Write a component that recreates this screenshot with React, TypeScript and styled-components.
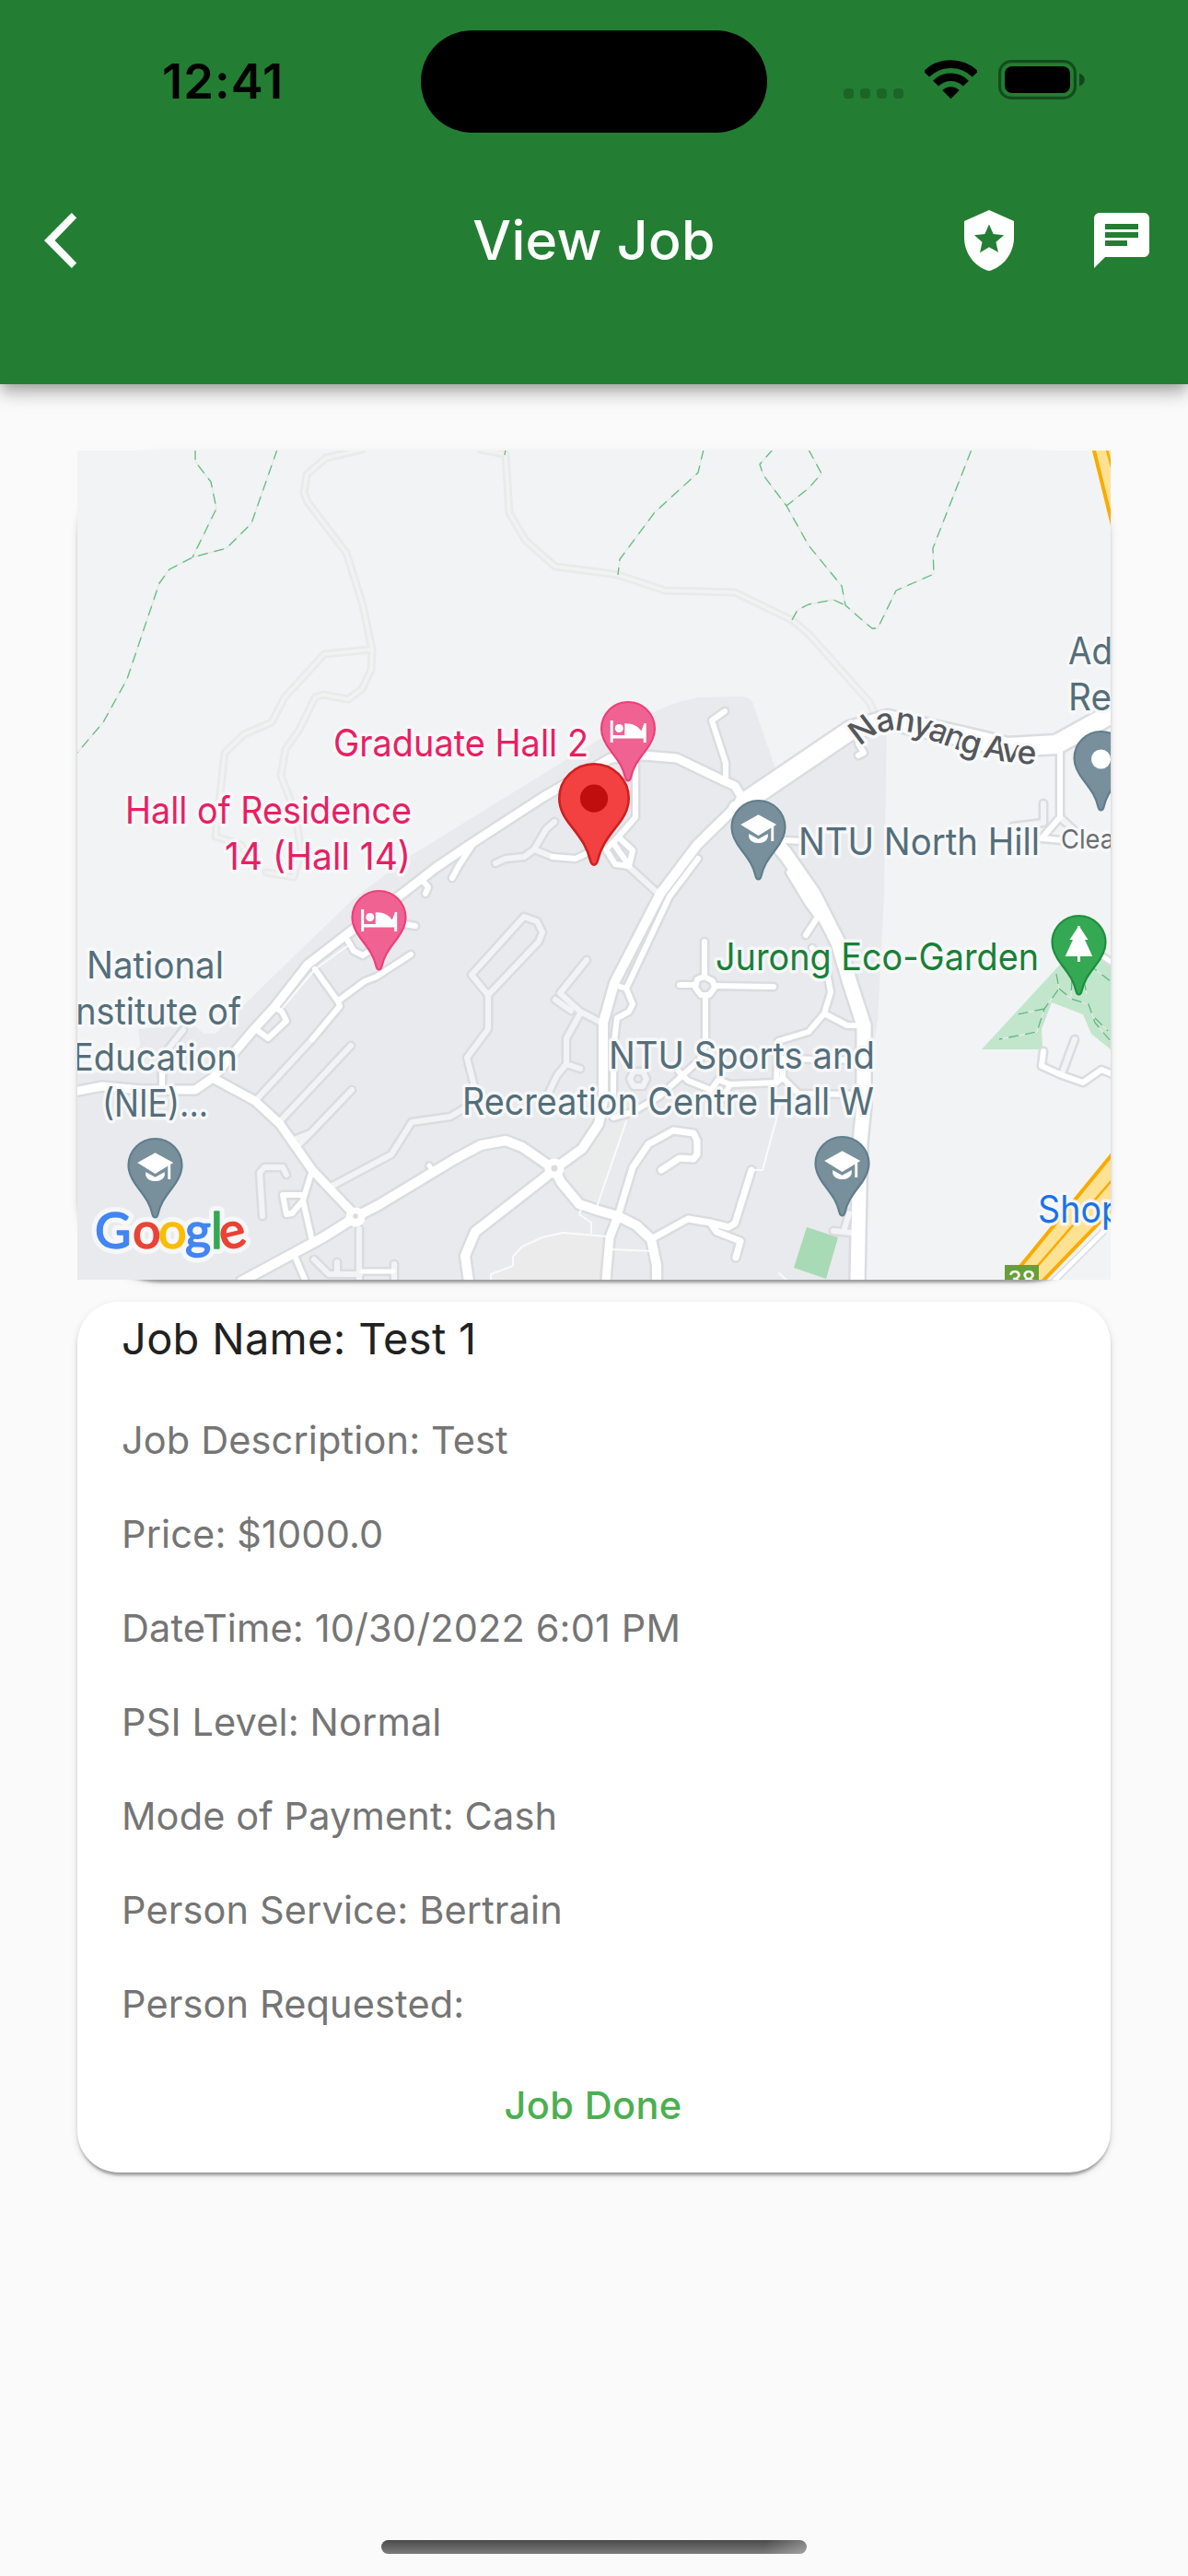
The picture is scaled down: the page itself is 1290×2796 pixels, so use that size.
import React from "react";
import styled, { createGlobalStyle } from "styled-components";

const GlobalStyle = createGlobalStyle`
  * { box-sizing: border-box; }
  body { margin: 0; background: #fafafa; }
`;

const FONT = `Inter, Roboto, "Liberation Sans", sans-serif`;

const Screen = styled.div`
  width: 1290px;
  height: 2796px;
  display: flex;
  flex-direction: column;
  background: #fafafa;
  font-family: ${FONT};
  overflow: hidden;
`;

const AppBar = styled.header`
  flex: none;
  height: 417px;
  background: #237e33;
  box-shadow: 0 6px 12px -3px rgba(0, 0, 0, 0.2), 0 12px 15px rgba(0, 0, 0, 0.14),
    0 3px 30px rgba(0, 0, 0, 0.12);
`;

const StatusBar = styled.div`
  height: 177px;
  display: grid;
  grid-template-columns: 457px 376px 457px;
`;

const Clock = styled.time`
  padding: 56px 0 0 176px;
  font-size: 52.5px;
  line-height: 64px;
  font-weight: 600;
  letter-spacing: 1px;
  color: #000;
`;

const Island = styled.div`
  margin-top: 33px;
  height: 111px;
  border-radius: 56px;
  background: #000;
`;

const StatusIcons = styled.div`
  display: flex;
  align-items: flex-start;
  padding: 65px 0 0 83px;
`;

const Signal = styled.div`
  display: flex;
  gap: 7px;
  margin: 31px 23px 0 0;
`;

const SignalDot = styled.span`
  width: 11px;
  height: 11px;
  border-radius: 4px;
  background: rgba(0, 0, 0, 0.2);
`;

const WifiIcon = styled.svg`
  width: 57px;
  height: 43px;
  margin-right: 23px;
`;

const BatteryIcon = styled.svg`
  width: 95px;
  height: 43px;
`;

const Toolbar = styled.div`
  height: 168px;
  display: grid;
  grid-template-columns: 1fr auto 1fr;
  align-items: center;
  padding: 0 36px 0 48px;
`;

const BackButton = styled.button`
  display: flex;
  width: 36px;
  padding: 0;
  border: 0;
  background: none;
`;

const Title = styled.h1`
  margin: 0 0 0 -12px;
  font-size: 59px;
  line-height: 72px;
  font-weight: 500;
  letter-spacing: 0.3px;
  color: #fff;
`;

const Actions = styled.div`
  display: flex;
  justify-content: flex-end;
  gap: 72px;
`;

const ActionIcon = styled.svg`
  width: 72px;
  height: 72px;
  fill: #fff;
`;

const Content = styled.main`
  display: flex;
  flex-direction: column;
  gap: 24px;
  padding: 72px 84px 0;
`;

const cardShadow = `0 6px 3px -3px rgba(0, 0, 0, 0.2), 0 3px 3px rgba(0, 0, 0, 0.14),
  0 3px 9px rgba(0, 0, 0, 0.12)`;

const MapCard = styled.section`
  height: 900px;
  border-radius: 90px;
  box-shadow: ${cardShadow};
`;

const MapCanvas = styled.svg`
  display: block;
  width: 1122px;
  height: 900px;
  font-family: ${FONT};
`;

const JobCard = styled.section`
  height: 945px;
  display: flex;
  flex-direction: column;
  padding-left: 48px;
  border-radius: 45px;
  background: #fff;
  box-shadow: ${cardShadow};
`;

const JobName = styled.h2`
  margin: 0 0 19px;
  font-size: 47px;
  line-height: 80px;
  font-weight: 400;
  letter-spacing: 0.3px;
  color: #212121;
`;

const Field = styled.p`
  margin: 0;
  font-size: 41.5px;
  line-height: 102px;
  letter-spacing: 0.13px;
  color: #757575;
`;

const DoneButton = styled.button`
  margin: 0 50px 0 0;
  padding: 0;
  border: 0;
  background: none;
  font-family: ${FONT};
  font-size: 41.5px;
  line-height: 118px;
  font-weight: 550;
  letter-spacing: 0.4px;
  color: #4caf50;
`;

const HomeArea = styled.footer`
  margin-top: auto;
  display: flex;
  justify-content: center;
  padding-bottom: 24px;
`;

const HomeIndicator = styled.div`
  width: 462px;
  height: 15px;
  border-radius: 8px;
  background: linear-gradient(100deg, transparent 90%, rgba(255, 255, 255, 0.3)),
    linear-gradient(#4a4a4a, #7c7c7c);
`;

const fields = [
  "Job Description: Test",
  "Price: $1000.0",
  "DateTime: 10/30/2022 6:01 PM",
  "PSI Level: Normal",
  "Mode of Payment: Cash",
  "Person Service: Bertrain",
  "Person Requested:",
];

/* ---------- map data ---------- */

type Road = { w: number; d: string };

const trackRoads = [
  "M309-1L270 8L249 26L246 46L250 56L292 111L310 168L320 216L319 238L309 259L294 270L267 265L258 268L241 303L226 324L221 353L236 391L243 434L235 463L205 458",
  "M318 216L268 221L225 268L211 295L181 308L160 328L150 419L178 428L192 451",
  "M438-1L465 4L469 68L487 98L519 126L566 132L587 135L638 152L714 154L776 184L794 199L860 273L867 288",
];

const footpaths = [
  "M128-1L128 12L145 34L151 63L125 116",
  "M217-1L189 79L162 106L125 116L100 129L89 144L54 248L28 295L0 328",
  "M680-1L674 24L627 67L589 118L587 135",
  "M755-1L741 15L745 27L770 60L794 103L830 147L834 168L858 189L863 193L869 193L889 152L930 134L929 106L971-1",
  "M794-1L808 25L794 41L770 60",
  "M776 184L782 173L794 167L821 162L834 168",
  "M465-1L464 5",
];

const serviceRoads = [
  "M115 629L92 658L92 680",
  "M195 704L255 639",
  "M220 728L297 646",
  "M240 754L253 741L298 694M235 748L253 741",
  "M201 831L198 784L203 778L223 778L227 786",
  "M277 798L341 764L363 729L405 723L425 711L432 694L423 659L446 628L446 591L428 569L485 506L499 511L505 523L501 533L446 591",
  "M553 553L524 589L546 609L569 621M519 596L536 608",
  "M546 611L531 638L531 666L546 671M531 666L521 678L508 705",
  "M518 403L509 411L496 433L485 441L465 443L454 448M496 433L516 441",
  "M598 451L631 481",
  "M604 674L614 674L618 682L614 690L604 690L600 682Z",
  "M257 878L273 894L307 894M282 881L282 894M306 845L306 900M344 883L344 900",
  "M1083 639L1070 674",
  "M838 828L832 848M821 847L840 849",
  "M1049 383L1049 404L1016 408",
  "M1067 398L1082 412",
];

const streets: Road[] = [
  { w: 6, d: "M255 639L285 603L283 598L258 563M285 596L312 576L325 571L362 547" },
  { w: 6, d: "M195 629L207 638L227 619L222 609L213 604" },
  { w: 6, d: "M293 531L300 543L310 548L325 538" },
  { w: 6, d: "M355 514L367 516M376 468L381 474L378 481M429 428L414 451L407 464" },
  { w: 6, d: "M92 691L92 660" },
  { w: 6, d: "M255 781L245 814L255 858M245 808L223 808L227 829L233 828L245 814M236 874L247 900" },
  { w: 5, d: "M309 891L343 891" },
  { w: 6, d: "M516 441L541 443L560 434" },
  { w: 6, d: "M606 338L606 398L586 421L574 433L584 449L599 451L603 434L589 421M582 426L598 449" },
  { w: 6, d: "M703 283L689 293L704 339L704 359" },
  { w: 6, d: "M848 318L854 328L848 331" },
  { w: 6, d: "M773 458L793 491L804 506L791 526" },
  { w: 6, d: "M769 423L786 424" },
  { w: 6, d: "M674 443L643 484L596 584L603 601L599 609L586 616L583 641L582 684L582 724L603 718L632 701L676 661M583 580L596 584" },
  { w: 6, d: "M681 533L681 570M654 580L671 580M692 581L756 582M682 592L682 645L676 661" },
  { w: 6, d: "M681 571L690 576L692 583L686 591L677 591L671 583L673 574Z" },
  { w: 6, d: "M798 540L813 561L818 588L811 611L794 631L761 641L759 686M811 611L836 624L853 624" },
  { w: 6, d: "M653 674L663 684L688 694L696 683L709 688L759 686L766 681L783 698L850 699M766 681L766 660L850 662" },
  { w: 6, d: "M688 694L684 702L700 704L709 688" },
  { w: 7, d: "M587 831L603 778L620 753L647 738L669 741L673 749L673 764L669 769L654 768L634 781" },
  { w: 7, d: "M623 856L663 834L687 838L707 843L714 839L732 781M687 838L694 848L720 858L715 876" },
  { w: 6, d: "M1067 328L1067 398L1047 421L1069 423" },
  { w: 6, d: "M1049 652L1047 668L1069 678L1092 686L1112 672L1124 677" },
  { w: 5, d: "M1100 540L1124 556" },
  { w: 9, d: "M587 831L578 854L574 900" },
  { w: 9, d: "M723 379L714 364L703 359L651 334L616 331L579 334L506 376L432 424L389 453L349 484L294 524L250 558L214 604L192 628L147 681L128 694L70 694L27 690L-4 696" },
  { w: 9, d: "M147 681L193 706L220 731L255 781L293 821L302 831" },
  { w: 10, d: "M178 902L267 854L302 832L327 819L410 769L438 754L465 749L483 756L509 774L518 779" },
  { w: 5, d: "M382 776L387 784" },
  { w: 10, d: "M518 779L509 788L432 848L421 874L425 902M518 779L525 794L545 818L566 825L587 831L607 841L623 856L629 884L629 902" },
  { w: 10, d: "M719 383L673 428L633 481L583 578L571 621L571 705L566 731L548 758L519 779" },
  { w: 15, d: "M715 388L745 410L769 438L799 481L826 534L839 578L854 624L854 711L850 751L847 902" },
  { w: 20, d: "M724 382L839 304L880 292L960 310L1010 322L1063 319L1128 283" },
];

const thinPaths = [
  "M222 606L258 563L293 538",
  "M596 728L564 821",
  "M765 704L744 781L732 781",
  "M578 867L625 869",
  "M449 902L449 894L473 885L473 875L483 864L505 854L527 849L574 853M558 849L558 838L545 829L547 823",
  "M762 893L772 902",
];

const parkPaths =
  "M1063 568L1066 584L1050 606L1042 631L1001 639M1050 606L1021 612M1066 584L1079 595L1098 601L1105 621L1122 641M1098 558L1122 576M1105 616L1119 630M1080 575L1079 593M1093 575L1096 590";

type LabelProps = { x: number; y: number; w?: number; color: string; size?: number; children: string };

const Label = ({ x, y, w, color, size = 40.5, children }: LabelProps) => (
  <text
    x={x}
    y={y}
    textLength={w}
    lengthAdjust="spacingAndGlyphs"
    fontSize={size}
    fontWeight={430}
    fill={color}
    stroke="#f8f9fa"
    strokeOpacity={0.92}
    strokeWidth={7}
    strokeLinejoin="round"
    paintOrder="stroke"
  >
    {children}
  </text>
);

const PIN =
  "M30 1A29 29 0 0 0 1 30C1 40 6 47.500 12 55C20 65.500 24.500 72 27 83Q28 86.500 30 86.500Q32 86.500 33 83C35.500 72 40 65.500 48 55C54 47.500 59 40 59 30A29 29 0 0 0 30 1Z";

type PinProps = { x: number; y: number; fill: string; edge: string; children?: React.ReactNode };

const Pin = ({ x, y, fill, edge, children }: PinProps) => (
  <g transform={`translate(${x} ${y})`}>
    <path d={PIN} fill={fill} stroke={edge} strokeWidth={2.2} />
    {children}
  </g>
);

const BedGlyph = () => (
  <g fill="#fff">
    <path d="M10.700 21H13.700V37H46.700V33L47.300 24H49.700V45H46.700V40.500H13.700V45H10.700Z" />
    <circle cx="20.300" cy="29.500" r="4.500" />
    <path d="M26.300 24.300C35 24 40.500 27 44.300 32.500L47.300 24.500V37H26.300Z" />
  </g>
);

const CapGlyph = () => (
  <g fill="#fff">
    <path d="M30 16.300L49.700 27L30 39L10.700 27Z" />
    <path d="M43.800 29L46.700 27V45H43.800Z" />
    <path d="M19.700 37L30 42.800L40.300 37V41Q38 47 30 47Q22 47 19.700 41Z" />
  </g>
);

const TreeGlyph = () => (
  <path d="M28.500 12H31.500V14L40 27H36.500L44.700 45H31.500V51H28.500V45H15.200L23.500 27H20L28.500 14Z" fill="#fff" />
);

const SLATE = "#546e7a";
const PINK = "#e91e63";

const logo: [string, number, string][] = [
  ["G", 19, "#4285f4"],
  ["o", 60, "#ea4335"],
  ["o", 88, "#fbbc04"],
  ["g", 117, "#4285f4"],
  ["l", 145, "#34a853"],
];

const GoogleLogo = () => (
  <g fontFamily="Lato, Inter, sans-serif" fontSize="54" fontWeight="400" strokeLinejoin="round">
    {[true, false].map((halo) => (
      <g key={String(halo)}>
        {logo.map(([c, x, color]) => (
          <text key={x} x={x} y={865.5} fill={color} stroke={halo ? "#f5f7f8" : color} strokeWidth={halo ? 12 : 1.6}>
            {c}
          </text>
        ))}
        <text
          transform="translate(154.500 865.500) rotate(-14 14 -13)"
          fill="#ea4335"
          stroke={halo ? "#f5f7f8" : "#ea4335"}
          strokeWidth={halo ? 12 : 1.6}
        >
          e
        </text>
      </g>
    ))}
  </g>
);

const JobMap = () => (
  <MapCanvas viewBox="0 0 1122 900">
    <rect width="1122" height="900" fill="#f1f3f4" />
    <path
      d="M0 676L60 674L68 645L66 628L125 622L137 633L150 633L200 583L298 488L360 441L566 314L621 286L649 274L673 268L719 267Q730 267 733 273L759 348L879 298L876 484L869 618L858 691L854 900H0Z"
      fill="#e8eaed"
    />
    <path d="M449 900V894L473 885V875L483 864L505 854L527 849L574 853V900Z" fill="#ebebeb" />
    <path d="M596 728L564 821L520 780L556 740Z" fill="#eaebeb" />
    <path d="M982 650L1067 558L1105 540L1122 556V650L1101 633L1092 612L1058 599L1047 628L1048 650Z" fill="#c1e6cc" />
    <path d="M792 843L826 854L813 899L778 887Z" fill="#a8dab5" />

    <g fill="none" strokeLinejoin="round" strokeLinecap="round">
      <g stroke="#e9eaea" strokeWidth="9">
        {trackRoads.map((d) => <path key={d} d={d} />)}
      </g>
      <g stroke="#f1f2f2" strokeWidth="3.500">
        {trackRoads.map((d) => <path key={d} d={d} />)}
      </g>
      <g stroke="#dadce0" strokeWidth="11">
        {serviceRoads.map((d) => <path key={d} d={d} />)}
      </g>
      {streets.map((r) => <path key={r.d} d={r.d} stroke="#dadce0" strokeWidth={r.w + 5} />)}
      <g stroke="#f1f3f4" strokeWidth="6">
        {serviceRoads.map((d) => <path key={d} d={d} />)}
      </g>
      <g stroke="#fafafa" strokeWidth="2">
        {thinPaths.map((d) => <path key={d} d={d} />)}
      </g>
      {streets.map((r) => <path key={r.d} d={r.d} stroke="#fff" strokeWidth={r.w} />)}
      <circle cx="302" cy="832" r="9" fill="#fff" stroke="#fff" strokeWidth="3" />
      <circle cx="302" cy="831" r="2.800" fill="#dadce0" />
      <circle cx="518" cy="779" r="9" fill="#fff" stroke="#fff" strokeWidth="3" />
      <circle cx="518" cy="779" r="3.500" fill="#dadce0" />
      <g strokeWidth="1.300" strokeLinecap="butt">
        <g stroke="#e6e8e8">
          {footpaths.map((d) => <path key={d} d={d} />)}
          <path d={parkPaths} />
        </g>
        <g stroke="#63bd80" strokeDasharray="11 7">
          {footpaths.map((d) => <path key={d} d={d} />)}
          <path d={parkPaths} stroke="#5fb57b" />
        </g>
      </g>
      <path d="M1124 838L1060 902" stroke="#dadce0" strokeWidth="8" />
      <path d="M1124 838L1060 902" stroke="#fff" strokeWidth="5" />
      <path d="M1102-1L1124 84V-1Z" fill="#fee293" />
      <path d="M1103-4L1124 81" stroke="#f9ab00" strokeWidth="4" />
      <path d="M1118-1L1123 18" stroke="#f9ab00" strokeWidth="2.500" />
      <path d="M1126 761L1008 905H1044L1126 822Z" fill="#fee293" />
      <path d="M1126 761L1008 905M1126 821L1044 906" stroke="#f9ab00" strokeWidth="4" />
      <path d="M1126 789L1028 902" stroke="#f9ab00" strokeWidth="2.500" />
    </g>

    <rect x="1007" y="884" width="37" height="16" fill="#689f38" />
    <text x="1025.500" y="908" textAnchor="middle" fontSize="24" fontWeight="500" fill="#fff">38</text>

    <path id="avenue" d="M850 322C868 303 886 301 904 306C936 316 955 327 985 333Q1012 340 1050 341" fill="none" />
    <text
      fontSize="35.500"
      fontWeight="500"
      letterSpacing="-2.300"
      fill="#55575b"
      stroke="#f8f9fa"
      strokeWidth="7"
      strokeLinejoin="round"
      paintOrder="stroke"
    >
      <textPath href="#avenue">Nanyang Ave</textPath>
    </text>

    <Label x={278} y={332} w={277} color={PINK}>Graduate Hall 2</Label>
    <Label x={52} y={405} w={311} color={PINK}>Hall of Residence</Label>
    <Label x={160} y={455} w={202} color={PINK}>14 (Hall 14)</Label>
    <Label x={10} y={573} w={149} color={SLATE}>National</Label>
    <Label x={-12} y={623} w={190} color={SLATE}>Institute of</Label>
    <Label x={-5} y={673} w={179} color={SLATE}>Education</Label>
    <Label x={27} y={723} w={115} color={SLATE}>(NIE)...</Label>
    <Label x={577} y={671} w={289} color={SLATE}>NTU Sports and</Label>
    <Label x={418} y={721} w={447} color={SLATE}>Recreation Centre Hall W</Label>
    <Label x={783} y={439} w={262} color={SLATE}>NTU North Hill</Label>
    <Label x={693} y={564} w={351} color="#188038">Jurong Eco-Garden</Label>
    <Label x={1076} y={232} w={48} color={SLATE}>Ad</Label>
    <Label x={1076} y={282} w={47} color={SLATE}>Re</Label>
    <Label x={1068} y={432} w={58} size={29} color="#6b6e72">Clea</Label>
    <Label x={1043} y={838} w={92} color="#1a73e8">Shop</Label>

    <Pin x={568} y={272} fill="#f06292" edge="#ec407a"><BedGlyph /></Pin>
    <Pin x={297.5} y={477} fill="#f06292" edge="#ec407a"><BedGlyph /></Pin>
    <Pin x={709.5} y={379} fill="#78909c" edge="#607d8b"><CapGlyph /></Pin>
    <Pin x={54.500} y={746} fill="#78909c" edge="#607d8b"><CapGlyph /></Pin>
    <Pin x={800.5} y={744} fill="#78909c" edge="#607d8b"><CapGlyph /></Pin>
    <Pin x={1081.5} y={304} fill="#78909c" edge="#607d8b">
      <circle cx="30" cy="31" r="10.500" fill="#fff" />
    </Pin>
    <Pin x={1057.5} y={504} fill="#34a853" edge="#1e8e3e"><TreeGlyph /></Pin>
    <g transform="translate(522 339) scale(1.300 1.280)">
      <path d={PIN} fill="#f34040" stroke="#d01f1f" strokeWidth="2" />
      <ellipse cx="30" cy="30.200" rx="11.600" ry="11.800" fill="#c00e0e" />
    </g>
    <GoogleLogo />
  </MapCanvas>
);

export default function App() {
  return (
    <Screen>
      <GlobalStyle />
      <AppBar>
        <StatusBar>
          <Clock>12:41</Clock>
          <Island />
          <StatusIcons>
            <Signal>
              {[0, 1, 2, 3].map((i) => <SignalDot key={i} />)}
            </Signal>
            <WifiIcon viewBox="0 0 57 43">
              <g fill="none" stroke="#000">
                <path d="M2 15.500A37.500 37.500 0 0 1 55 15.500" strokeWidth="8.800" />
                <path d="M12.100 25.600A23.200 23.200 0 0 1 44.900 25.600" strokeWidth="8.400" />
              </g>
              <path d="M28.500 42.300L19.300 33A13 13 0 0 1 37.700 33Z" />
            </WifiIcon>
            <BatteryIcon viewBox="0 0 95 43">
              <rect x="1.600" y="1.600" width="81.800" height="39.800" rx="12.500" fill="none" stroke="#000" strokeOpacity="0.4" strokeWidth="3.200" />
              <rect x="7" y="7" width="71" height="29" rx="8" />
              <path d="M88 14.500Q93.800 17 93.800 21.500Q93.800 26 88 28.500Z" fillOpacity="0.45" />
            </BatteryIcon>
          </StatusIcons>
        </StatusBar>
        <Toolbar>
          <BackButton aria-label="Back">
            <svg width="36" height="60" viewBox="0 0 36 60">
              <path d="M29.800 0L35.200 5.400L11.500 30L35.200 54.600L29.800 60L0 30Z" fill="#fff" />
            </svg>
          </BackButton>
          <Title>View Job</Title>
          <Actions>
            <ActionIcon viewBox="0 0 24 24">
              <path d="M12 1L3 5v6c0 5.550 3.840 10.740 9 12c5.160-1.260 9-6.450 9-12V5L12 1zM14.500 12.590l.8 3.700L12 14.420l-3.300 1.970l.8-3.800l-2.850-2.500l3.810-.43L12 6.150l1.540 3.510l3.810.43L14.500 12.590z" />
            </ActionIcon>
            <ActionIcon viewBox="0 0 24 24">
              <path d="M20 2H4c-1.100 0-1.990.9-1.990 2L2 22l4-4h14c1.100 0 2-.9 2-2V4c0-1.100-.9-2-2-2zM6 9h12v2H6V9zm8 5H6v-2h8v2zm4-6H6V6h12v2z" />
            </ActionIcon>
          </Actions>
        </Toolbar>
      </AppBar>
      <Content>
        <MapCard>
          <JobMap />
        </MapCard>
        <JobCard>
          <JobName>Job Name: Test 1</JobName>
          {fields.map((f) => <Field key={f}>{f}</Field>)}
          <DoneButton>Job Done</DoneButton>
        </JobCard>
      </Content>
      <HomeArea>
        <HomeIndicator />
      </HomeArea>
    </Screen>
  );
}
